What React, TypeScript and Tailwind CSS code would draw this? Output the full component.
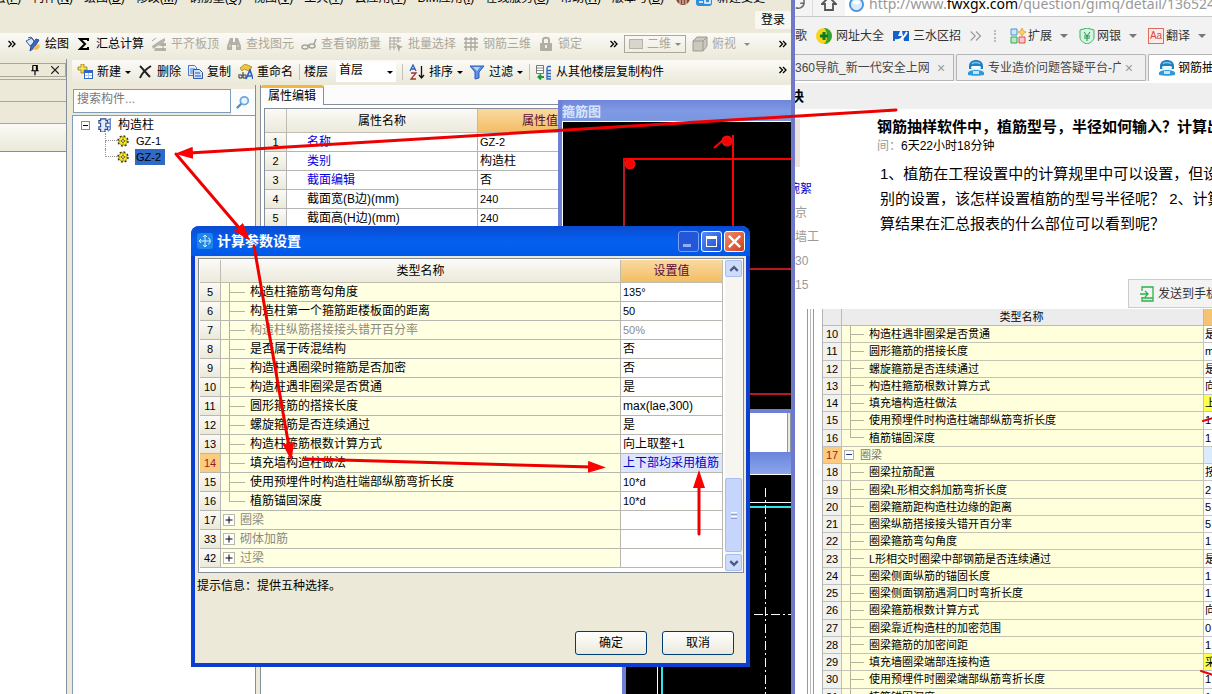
import { useState } from "react";
import type { ReactNode } from "react";

type Param = { no: number; name: string; value?: string; disabled?: boolean; group?: boolean; selected?: boolean };

const dialogRows: Param[] = [
  { no: 5, name: "构造柱箍筋弯勾角度", value: "135°" },
  { no: 6, name: "构造柱第一个箍筋距楼板面的距离", value: "50" },
  { no: 7, name: "构造柱纵筋搭接接头错开百分率", value: "50%", disabled: true },
  { no: 8, name: "是否属于砖混结构", value: "否" },
  { no: 9, name: "构造柱遇圈梁时箍筋是否加密", value: "否" },
  { no: 10, name: "构造柱遇非圈梁是否贯通", value: "是" },
  { no: 11, name: "圆形箍筋的搭接长度", value: "max(lae,300)" },
  { no: 12, name: "螺旋箍筋是否连续通过", value: "是" },
  { no: 13, name: "构造柱箍筋根数计算方式", value: "向上取整+1" },
  { no: 14, name: "填充墙构造柱做法", value: "上下部均采用植筋", selected: true },
  { no: 15, name: "使用预埋件时构造柱端部纵筋弯折长度", value: "10*d" },
  { no: 16, name: "植筋锚固深度", value: "10*d" },
  { no: 17, name: "圈梁", group: true },
  { no: 33, name: "砌体加筋", group: true },
  { no: 42, name: "过梁", group: true },
];

const forumRows: Param[] = [
  { no: 10, name: "构造柱遇非圈梁是否贯通", value: "是" },
  { no: 11, name: "圆形箍筋的搭接长度", value: "m" },
  { no: 12, name: "螺旋箍筋是否连续通过", value: "是" },
  { no: 13, name: "构造柱箍筋根数计算方式", value: "向" },
  { no: 14, name: "填充墙构造柱做法", value: "上", selected: true },
  { no: 15, name: "使用预埋件时构造柱端部纵筋弯折长度", value: "1" },
  { no: 16, name: "植筋锚固深度", value: "1" },
  { no: 17, name: "圈梁", group: true },
  { no: 18, name: "圈梁拉筋配置", value: "按" },
  { no: 19, name: "圈梁L形相交斜加筋弯折长度", value: "2" },
  { no: 20, name: "圈梁箍筋距构造柱边缘的距离", value: "5" },
  { no: 21, name: "圈梁纵筋搭接接头错开百分率", value: "5" },
  { no: 22, name: "圈梁箍筋弯勾角度", value: "1" },
  { no: 23, name: "L形相交时圈梁中部钢筋是否连续通过", value: "是" },
  { no: 24, name: "圈梁侧面纵筋的锚固长度", value: "1" },
  { no: 25, name: "圈梁侧面钢筋遇洞口时弯折长度", value: "1" },
  { no: 26, name: "圈梁箍筋根数计算方式", value: "向" },
  { no: 27, name: "圈梁靠近构造柱的加密范围", value: "0" },
  { no: 28, name: "圈梁箍筋的加密间距", value: "1" },
  { no: 29, name: "填充墙圈梁端部连接构造", value: "采", selected: true },
  { no: 30, name: "使用预埋件时圈梁端部纵筋弯折长度", value: "1" },
  { no: 31, name: "植筋锚固深度", value: "1" },
];

const properties = [
  { no: 1, name: "名称", value: "GZ-2", link: true },
  { no: 2, name: "类别", value: "构造柱", link: true },
  { no: 3, name: "截面编辑", value: "否", link: true },
  { no: 4, name: "截面宽(B边)(mm)", value: "240" },
  { no: 5, name: "截面高(H边)(mm)", value: "240" },
];

const menus: [string, string][] = [
  ["楼层", "F"], ["构件", "N"], ["绘图", "D"], ["修改", "M"], ["钢筋量", "Q"], ["视图", "V"],
  ["工具", "T"], ["云应用", "Y"], ["BIM应用", "I"], ["在线服务", "S"], ["帮助", "H"], ["版本号", "B"],
];

const Svg = ({ children, className = "size-4" }: { children: ReactNode; className?: string }) => (
  <svg viewBox="0 0 16 16" fill="none" className={`shrink-0 ${className}`}>{children}</svg>
);

const Icons = {
  draw: (
    <Svg>
      <path d="M1 5l6-3 3 5-5 3z" fill="#dbe8f8" stroke="#3a5a98" />
      <path d="M3 2l3-1 4 5" stroke="#3a5a98" />
      <path d="M14 4l-5 8-4 3 1-5 5-7z" fill="#3e68c0" stroke="#2a4a90" />
      <path d="M8 13c2 2 5 1 7-2l-1-3-4 2z" fill="#f0c050" />
    </Svg>
  ),
  level: (
    <Svg>
      <path d="M1 10l9-6 4-2v3L2 13z" fill="#b5b3a8" />
      <path d="M4 12h11v3H3zM9 7h6v3H8z" fill="#b5b3a8" />
      <path d="M1 5l4-3M12 6v8" stroke="#a8a69a" />
    </Svg>
  ),
  binoculars: (
    <Svg>
      <path d="M4 2h3v4h2V2h3l3 8v4h-5V9H6v5H1v-4z" fill="#b3b1a6" />
      <path d="M3 10h2M11 10h2" stroke="#e8e6da" />
    </Svg>
  ),
  glasses: (
    <Svg>
      <ellipse cx="4" cy="11" rx="3" ry="2" stroke="#a5a399" strokeWidth="1.5" />
      <ellipse cx="11" cy="10" rx="3" ry="2" stroke="#a5a399" strokeWidth="1.5" />
      <path d="M6 10l2-1M13 8l2-5" stroke="#a5a399" strokeWidth="1.5" />
    </Svg>
  ),
  batch: (
    <Svg>
      <path d="M1 2h12M1 5h12M1 8h8M1 11h7M2 1v13M6 1v13M10 1v6" stroke="#aaa89d" />
      <path d="M8 8l7 3-3 1-1 4z" fill="#aaa89d" />
    </Svg>
  ),
  rebar3d: <Svg><path d="M1 3h14M1 7h14M1 11h14M3 1v14M8 1v14M12 1v14" stroke="#aaa89d" strokeWidth="1.3" /></Svg>,
  lock: (
    <Svg>
      <path d="M5 7V4c0-3 6-3 6 0v3" stroke="#b0aea3" strokeWidth="2" />
      <rect x="2" y="7" width="12" height="8" rx="1" fill="#b0aea3" />
      <path d="M8 9v3" stroke="#eee" strokeWidth="2" />
    </Svg>
  ),
  view: (
    <Svg>
      <path d="M1 5l4-4h10v9l-4 5H1z" fill="#cbc9be" stroke="#9c9a90" />
      <path d="M1 5h10v10M11 5l4-4" stroke="#9c9a90" />
    </Svg>
  ),
  add: (
    <Svg>
      <path d="M4 0h3v3h3v3H7v3H4V6H1V3h3z" fill="#ffe04a" stroke="#8a6d00" strokeWidth=".7" />
      <rect x="7.5" y="6.5" width="8" height="8" fill="#fff" stroke="#2e66c4" />
      <path d="M8 8h7" stroke="#2e66c4" strokeWidth="2" />
      <path d="M8 11.500h7M11.500 9v5" stroke="#a9c6f0" />
    </Svg>
  ),
  remove: <Svg><path d="M3 2c3 3 6 7 10 11M14 2C9 5 5 9 3 14" stroke="#222" strokeWidth="2" /></Svg>,
  copy: (
    <Svg>
      <path d="M1.500 1.500h6l2 2v8h-8z" fill="#e5eefc" stroke="#4a78c8" />
      <path d="M3 5h5M3 7h5M3 9h3" stroke="#4a78c8" />
      <path d="M6.500 5.500h6l3 3v6h-9z" fill="#cfe0fa" stroke="#2b57ac" />
      <path d="M8 9h5M8 12h6" stroke="#2b57ac" />
    </Svg>
  ),
  rename: (
    <Svg>
      <path d="M3 4l5-4 7 3-3 4-5-2-2 2z" fill="#f0c83c" stroke="#9a7414" strokeWidth=".7" />
      <path d="M1 11h4v3H2v-2M6 8v6h3v-3H6" stroke="#333" />
      <path d="M9 15l4-9 3 9M10 12h4" stroke="#2b5cc0" strokeWidth="1.6" />
    </Svg>
  ),
  sort: (
    <Svg>
      <path d="M1 7l3-6 3 6M2 5h4" stroke="#2b5cc0" strokeWidth="1.3" />
      <path d="M2 9h5l-5 6h5" stroke="#a03434" strokeWidth="1.3" />
      <path d="M12.500 2v12M10 11l2.500 3L15 11" stroke="#111" strokeWidth="1.3" />
    </Svg>
  ),
  filter: (
    <Svg>
      <path d="M1 2h14L10 8v6l-4 1V8z" fill="#5b92e6" stroke="#2c5cb4" />
      <path d="M4 3h7L8 7z" fill="#b9d4fa" />
    </Svg>
  ),
  floors: (
    <Svg>
      <path d="M.5 1.500h7v8h-7z" fill="#fff" stroke="#777" />
      <path d="M1 4h6M1 6.500h6" stroke="#888" />
      <path d="M8 13H3M5 10.500L2.500 13 5 15.500" stroke="#1c9a38" strokeWidth="2" />
      <path d="M15 2.500h-3l-1 1.500v11h4M11 6.500h4M11 9.500h4M11 12.500h4" stroke="#2e66c4" strokeWidth="1.300" />
    </Svg>
  ),
  gear: (
    <svg viewBox="0 0 12 12" className="size-3 shrink-0">
      <circle cx="6" cy="6" r="5" fill="none" stroke="#3a3600" strokeWidth="1.500" strokeDasharray="2 1.900" />
      <circle cx="6" cy="6" r="4.200" fill="#fff22a" stroke="#6a6200" strokeWidth=".6" />
      <path d="M6 2v8M2 6h8" stroke="#8a8000" strokeWidth=".7" />
      <circle cx="6" cy="6" r="1.400" fill="#fff" stroke="#4a4400" strokeWidth=".8" />
    </svg>
  ),
  agent: (
    <Svg>
      <path d="M1 9V6c0-8 14-8 14 0v3z" fill="#1f7fc0" />
      <path d="M4 4c1-2 7-2 8 0" stroke="#7cc6f0" strokeWidth="1.500" />
      <rect x="3" y="6" width="10" height="3" rx="1.500" fill="#f2fbff" />
      <path d="M0 15v-2c0-4 16-4 16 0v2c-4 1-12 1-16 0z" fill="#2f9ad8" />
      <rect x="5" y="11" width="6" height="3" fill="#bfe6fc" />
    </Svg>
  ),
};

const Caret = ({ className = "border-t-black" }: { className?: string }) => (
  <span className={`size-0 shrink-0 border-x-[3px] border-t-[3px] border-x-transparent ${className}`} />
);

const Chevrons = () => (
  <Svg className="size-2"><path d="M1 2l6 6-6 6M8 2l6 6-6 6" stroke="#000" strokeWidth="2.600" /></Svg>
);

const Sep = () => <span className="h-4 w-px shrink-0 bg-[#c5c2b8]" />;

function ToolButton({ icon, label, caret, disabled }: { icon: ReactNode; label: string; caret?: boolean; disabled?: boolean }) {
  return (
    <button disabled={disabled} className="flex shrink-0 items-center gap-1 whitespace-nowrap disabled:text-[#aca899]">
      {icon}
      {label}
      {caret && <Caret />}
    </button>
  );
}

// elbow line in front of a tree leaf
function Branch({ last, className }: { last?: boolean; className: string }) {
  return (
    <span className={`flex shrink-0 flex-col self-stretch ${className}`}>
      <span className="flex-1 border-b border-l border-[#b4b49c]" />
      <span className={`flex-1 border-l ${last ? "border-transparent" : "border-[#b4b49c]"}`} />
    </span>
  );
}

function MenuBar() {
  return (
    <div className="flex h-[6px] shrink-0 items-end overflow-hidden leading-4">
      <div className="-ml-[18px] flex shrink-0 gap-[11px] whitespace-nowrap">
        {menus.map(([label, key]) => (
          <button key={label}>{label}(<u>{key}</u>)</button>
        ))}
        <span className="flex gap-[5px]">
          <Svg><circle cx="8" cy="8" r="7" fill="#8a4a3a" /><path d="M5 9v5M8 9v5M11 9v5" stroke="#f3dccb" /></Svg>
          <Svg><rect width="16" height="16" rx="3" fill="#2a8fe0" /><path d="M3 12h4M9 9h5v4H9z" stroke="#fff" strokeWidth="1.500" /></Svg>
          <button>新建变更</button>
        </span>
      </div>
    </div>
  );
}

function MainToolbar() {
  return (
    <div className="flex h-[26px] shrink-0 items-center bg-linear-to-b from-[#fbfaf7] to-[#ebe9d9] pb-1">
      <div className="flex w-[25px] shrink-0 pl-2"><Chevrons /></div>
      <div className="flex items-center gap-[7px]">
        <ToolButton icon={Icons.draw} label="绘图" />
        <ToolButton icon={<Svg><path d="M12 5V3H4l5 5-5 5h8v-2" stroke="#000" strokeWidth="2" /></Svg>} label="汇总计算" />
        <ToolButton disabled icon={Icons.level} label="平齐板顶" />
        <ToolButton disabled icon={Icons.binoculars} label="查找图元" />
        <ToolButton disabled icon={Icons.glasses} label="查看钢筋量" />
        <ToolButton disabled icon={Icons.batch} label="批量选择" />
        <ToolButton disabled icon={Icons.rebar3d} label="钢筋三维" />
        <ToolButton disabled icon={Icons.lock} label="锁定" />
      </div>
      <div className="ml-auto flex items-center gap-[6px] pr-1">
        <Chevrons />
        <div className="flex h-[18px] w-[62px] items-center justify-between border border-[#aca899] px-1 text-[#aca899]">
          <span className="h-[10px] w-[14px] border border-[#b5b3a8] bg-[#d8d6cc]" />
          <select aria-label="视图模式" disabled className="w-6 appearance-none"><option>二维</option></select>
          <Caret className="border-t-[#8d8b80]" />
        </div>
        <div className="flex w-[81px] items-center gap-1 text-[#aca899]">
          {Icons.view}
          <button disabled>俯视</button>
          <span className="flex pl-1"><Caret className="border-t-[#8d8b80]" /></span>
        </div>
        <Chevrons />
      </div>
    </div>
  );
}

function ComponentToolbar() {
  return (
    <div className="flex h-6 shrink-0 items-center gap-[6px] bg-linear-to-b from-[#fbfaf7] to-[#ebe9d9] pr-1 pl-[5px]">
      <ToolButton icon={Icons.add} label="新建" caret />
      <ToolButton icon={Icons.remove} label="删除" />
      <ToolButton icon={Icons.copy} label="复制" />
      <ToolButton icon={Icons.rename} label="重命名" />
      <div className="flex items-center gap-1">
        <Sep />
        <label htmlFor="floor">楼层</label>
        <div className="ml-1 flex h-5 w-[60px] items-center justify-between bg-white px-[3px]">
          <select id="floor" className="h-5 w-10 appearance-none pb-1"><option>首层</option></select>
          <Caret />
        </div>
      </div>
      <Sep />
      <ToolButton icon={Icons.sort} label="排序" caret />
      <ToolButton icon={Icons.filter} label="过滤" caret />
      <Sep />
      <ToolButton icon={Icons.floors} label="从其他楼层复制构件" />
      <span className="ml-auto flex pb-1"><Chevrons /></span>
    </div>
  );
}

function DockPanel() {
  return (
    <aside className="flex w-[67px] shrink-0 flex-col border-r border-[#848e98] bg-[#ece9d8] pt-1">
      <div className="flex h-[14px] shrink-0 items-center justify-end gap-2 border border-l-0 border-[#aca899] pr-1">
        <button aria-label="固定"><Svg className="size-3"><path d="M5 2h6v7M5 2v7M10 2v7M3 9h10M8 9v6" stroke="#000" strokeWidth="1.600" /></Svg></button>
        <button aria-label="关闭"><Svg className="size-3"><path d="M3 3l10 10M13 3L3 13" stroke="#222" strokeWidth="1.500" /></Svg></button>
      </div>
      <div className="mt-[2px] h-[23px] shrink-0 border-y border-[#aca899]" />
      <div className="h-[22px] shrink-0 border-b border-[#aca899]" />
      <div className="h-7 shrink-0 border-b border-[#848e98] bg-linear-to-b from-[#fbfaf7] to-[#ebe9d9]" />
      <div className="flex-1 bg-white" />
    </aside>
  );
}

function ComponentTree() {
  const [selected, setSelected] = useState("GZ-2");
  return (
    <aside className="flex w-[184px] shrink-0 flex-col border-r border-[#848e98]">
      <div className="mt-1 flex h-[26px] shrink-0 pl-px">
        <input aria-label="搜索构件" placeholder="搜索构件..." className="h-6 w-[158px] border border-[#7f9db9] bg-white px-[3px] pb-1 placeholder:text-[#777]" />
        <button aria-label="搜索" className="flex flex-1 items-center justify-center bg-[#fafcfe]">
          <Svg className="size-[14px]"><circle cx="9.500" cy="6.500" r="4.500" stroke="#6fa8dc" strokeWidth="2" fill="#eaf5fd" /><path d="M6 10l-5 5" stroke="#4a8ccc" strokeWidth="2.500" /></Svg>
        </button>
      </div>
      <div className="flex-1 border-t border-l border-[#7f9db9] bg-white pt-px">
        <div className="flex h-4 items-center gap-2 pl-2">
          <span className="flex size-[9px] items-center justify-center border border-[#7b8fa8]"><span className="h-px w-[5px] bg-black" /></span>
          <span className="flex items-center gap-[6px]">
            <Svg className="size-[14px]"><path d="M3 1h6v2h2v3H9v4h2v3H8v3H3v-3H1v-3h2V6H1V3h2z" fill="#e4ecfb" stroke="#2c478c" strokeWidth="1.300" /><path d="M11 2l3-1v12l-3 2M11 6h3M11 10h3" stroke="#5f80cc" strokeWidth="1.500" /></Svg>
            构造柱
          </span>
        </div>
        {["GZ-1", "GZ-2"].map((name, i) => (
          <div key={name} className="flex h-4 items-center pl-8">
            <span className="flex h-4 w-3 flex-col">
              <span className="h-2 border-b border-l border-dotted border-[#999]" />
              <span className={`h-2 border-dotted border-[#999] ${i === 0 ? "border-l" : ""}`} />
            </span>
            {Icons.gear}
            <button
              onClick={() => setSelected(name)}
              className={`ml-[6px] h-4 w-[30px] pl-px text-left text-[11px] leading-4 ${selected === name ? "bg-[#316ac5]" : ""}`}
            >
              {name}
            </button>
          </div>
        ))}
      </div>
    </aside>
  );
}

function PropertyGrid() {
  return (
    <table className="w-full table-fixed border-separate border-spacing-0 border-t border-l border-[#848e98] bg-white">
      <colgroup><col className="w-[22px]" /><col className="w-[191px]" /><col /></colgroup>
      <thead>
        <tr className="h-6 bg-linear-to-b from-[#fbfaf7] to-[#ebe9d9]">
          <th className="border-r border-b border-[#c0bdb0]" />
          <th className="border-r border-b border-[#c0bdb0] font-normal">属性名称</th>
          <th className="border-b border-[#c0bdb0] bg-linear-to-b from-[#fad9a0] to-[#f3bd62] pl-11 text-left font-normal text-[#5c0a3c]">属性值</th>
        </tr>
      </thead>
      <tbody>
        {properties.map((p) => (
          <tr key={p.no} className="h-[19px]">
            <td className="border-r border-b border-[#b4b4b4] bg-linear-to-b from-[#fbfaf7] to-[#ebe9d9] text-center text-[11px]">{p.no}</td>
            <td className={`border-r border-b border-[#b4b4b4] pl-5 ${p.link ? "text-[#0000e0]" : ""}`}>{p.name}</td>
            <td className="border-b border-[#b4b4b4] pl-[2px] text-[11px]">{/[0-9]/.test(p.value) ? p.value : <span className="text-xs leading-4">{p.value}</span>}</td>
          </tr>
        ))}
      </tbody>
    </table>
  );
}

function StirrupWindow() {
  return (
    <section className="absolute top-[15px] right-0 left-[297px] flex h-[313px] flex-col border-b-4 border-l-4 border-[#6f7fd6] bg-[#7a96df]">
      <h2 className="h-[21px] shrink-0 bg-linear-to-b from-[#6f86d8] via-[#7e9ae4] to-[#7a96df] text-[13px] leading-6 font-bold text-[#d8e4fc]">箍筋图</h2>
      <svg className="w-full flex-1 border-t border-l border-white bg-black" fill="none" stroke="#e81010" strokeWidth="2">
        <path d="M61 160V37h170M170 13v160M151 26l9-8" stroke="#ff0000" />
        <path d="M61 40v120M180 147h60M180 272h60" stroke="#b81820" />
        <circle cx="67" cy="42" r="4.500" fill="#ff0000" />
        <circle cx="164" cy="19" r="4.500" fill="#ff0000" />
      </svg>
    </section>
  );
}

function DrawingWindow() {
  return (
    <section className="absolute top-[367px] right-0 bottom-0 left-[361px] flex flex-col border-l-4 border-[#6f7fd6]">
      <div className="h-[22px] shrink-0 bg-linear-to-b from-[#6b84da] to-[#8aa6ec]" />
      <svg className="w-full flex-1 border-t border-white bg-black" fill="none">
        <path d="M31.500 220V27.500h140" stroke="#fff" />
        <path d="M36 220V32h140" stroke="#30e4e8" strokeWidth="2" />
        <path d="M139.500 13v220" stroke="#fff" strokeDasharray="9 3 2 3" />
        <path d="M128 139.500h40" stroke="#fff" strokeDasharray="9 3 2 3" />
      </svg>
    </section>
  );
}

function DesktopApp() {
  return (
    <div className="flex w-[795px] shrink-0 flex-col overflow-hidden border-r-4 border-[#7078cc] bg-[#ece9d8]">
      <MenuBar />
      <div className="flex h-[27px] shrink-0 items-center justify-end">
        <button className="h-[18px] rounded-xs bg-[#f8f7f2] px-[6px] leading-[18px]">登录</button>
      </div>
      <MainToolbar />
      <div className="flex min-h-0 flex-1">
        <DockPanel />
        <div className="ml-[5px] flex min-w-0 flex-1 flex-col pt-px">
          <ComponentToolbar />
          <div className="flex min-h-0 flex-1 gap-1 pt-px">
            <ComponentTree />
            <div className="relative flex min-w-0 flex-1 flex-col border-l border-[#848e98] bg-white">
              <div className="flex h-5 shrink-0">
                <button className="w-[63px] rounded-t-xs border-t-[3px] border-r border-t-[#f5b640] border-r-[#848e98] pb-1 leading-4">属性编辑</button>
                <span className="flex-1 border-b border-[#848e98] bg-[#fcfcfd]" />
              </div>
              <div className="pt-[3px] pl-[3px]"><PropertyGrid /></div>
              <StirrupWindow />
              <div className="absolute top-[328px] right-0 h-[39px] w-1 border-x border-[#8b99a5] bg-[#ece9d8]" />
              <DrawingWindow />
            </div>
          </div>
        </div>
      </div>
    </div>
  );
}

function ParamDialog() {
  return (
    <section role="dialog" aria-labelledby="dlg-title" className="absolute top-[226px] left-[191px] flex h-[441px] w-[559px] flex-col rounded-t-lg border-x-4 border-b-4 border-[#0a3fd0] bg-[#ece9d8]">
      <header className="-mx-1 flex h-[30px] shrink-0 items-center gap-1 rounded-t-lg bg-linear-to-b from-[#0a4ad0] via-[#0560f0] to-[#0058e8] pr-[5px] pl-[6px] text-white">
        <Svg><rect width="16" height="16" rx="3" fill="#1d86e8" /><path d="M8 2v12M2 8h11M6 4l2-2 2 2M4 6L2 8l2 2M11 5c3 0 3 6 0 6M6 12l2 2 2-2" stroke="#d4f2ff" /></Svg>
        <h2 id="dlg-title" className="flex-1 text-sm leading-4 font-bold">计算参数设置</h2>
        <div className="flex gap-[2px]">
          <button aria-label="最小化" className="flex size-[21px] items-end rounded-[3px] border border-[#7fa0ee] bg-[#2356d8] p-1"><span className="h-[3px] w-2 bg-[#8fb0f4]" /></button>
          <button aria-label="最大化" className="size-[21px] rounded-[3px] border border-white bg-linear-to-br from-[#5c8cf4] to-[#1648d0] p-1"><span className="block size-full border border-t-[3px] border-white" /></button>
          <button aria-label="关闭" className="flex size-[21px] items-center justify-center rounded-[3px] border border-white bg-linear-to-br from-[#f08a68] to-[#d03c14]"><Svg className="size-[15px]"><path d="M2 2l12 12M14 2L2 14" stroke="#fff" strokeWidth="2.500" /></Svg></button>
        </div>
      </header>
      <div className="mt-[2px] mr-[2px] ml-[3px] flex border border-[#848e98] bg-white pt-px pl-px">
        <table className="mb-1 flex-1 table-fixed border-separate border-spacing-0">
          <colgroup><col className="w-[21px]" /><col /><col className="w-[102px]" /></colgroup>
          <thead>
            <tr className="h-[23px] bg-linear-to-b from-[#fbfaf7] to-[#ebe9d9]">
              <th className="border-r border-b border-[#c0bdb0]" />
              <th className="border-r border-b border-[#c0bdb0] font-normal">类型名称</th>
              <th className="border-r border-b border-[#c0bdb0] bg-linear-to-b from-[#fad9a0] to-[#f3bd62] font-normal text-[#5c0a3c]">设置值</th>
            </tr>
          </thead>
          <tbody>
            {dialogRows.map((r) => (
              <tr key={r.no} className="h-[19px]">
                <td className={`border-r border-b border-[#b8b8b0] text-center text-[11px] ${r.selected ? "bg-[#fbcb80] text-[#a01c1c]" : "bg-linear-to-b from-[#fbfaf7] to-[#ebe9d9]"}`}>{r.no}</td>
                <td className={`border-r border-b border-[#b8b8b0] bg-[#ffffe1] ${r.disabled || r.group ? "text-[#8a8a80]" : ""}`}>
                  <div className="flex h-[18px] items-center">
                    {r.group ? (
                      <button aria-label="展开" className="mr-[5px] ml-[2px] flex size-3 items-center justify-center border border-[#b8b8b0] bg-white text-black">
                        <Svg className="size-2"><path d="M8 1v14M1 8h14" stroke="#000" strokeWidth="2" /></Svg>
                      </button>
                    ) : (
                      <Branch last={r.no === 16} className="mr-[5px] ml-2 w-4" />
                    )}
                    {r.name}
                  </div>
                </td>
                <td className={`border-r border-b border-[#b8b8b0] pl-[2px] whitespace-nowrap ${r.selected ? "bg-[#dde6fa] text-[#0000c8]" : ""} ${r.disabled ? "text-[#8a8a80]" : ""}`}>
                  <span className={/^[0-9]/.test(r.value ?? "") ? "text-[11px]" : "text-xs leading-4"}>{r.value}</span>
                </td>
              </tr>
            ))}
          </tbody>
        </table>
        <div className="ml-[2px] flex w-[18px] flex-col bg-[#f6f5f0] pr-px pb-px">
          <button aria-label="向上滚动" className="flex h-[17px] items-center justify-center rounded-xs border border-[#a9bdf0] bg-[#cddcfc]"><Svg className="size-[10px]"><path d="M2 11l6-6 6 6" stroke="#4a5a80" strokeWidth="3.500" /></Svg></button>
          <div className="flex-1" />
          <div className="flex h-[74px] flex-col items-center justify-center gap-px rounded-xs border border-[#a9bdf0] bg-[#c5d5fc]">
            <span className="h-px w-[6px] bg-white" />
            <span className="h-px w-[6px] bg-[#8ba4e0]" />
            <span className="h-px w-[6px] bg-white" />
            <span className="h-px w-[6px] bg-[#8ba4e0]" />
          </div>
          <button aria-label="向下滚动" className="mt-[2px] flex h-[17px] items-center justify-center rounded-xs border border-[#a9bdf0] bg-[#cddcfc]"><Svg className="size-[10px]"><path d="M2 5l6 6 6-6" stroke="#4a5a80" strokeWidth="3.500" /></Svg></button>
        </div>
      </div>
      <p className="flex-1 px-[2px] pt-[5px] leading-4">提示信息：提供五种选择。</p>
      <footer className="flex justify-end gap-[15px] pr-3 pb-2">
        {["确定", "取消"].map((t) => (
          <button key={t} className="h-6 w-[72px] rounded-[3px] border border-[#003c74] bg-linear-to-b from-white to-[#ebe9dc] leading-4">{t}</button>
        ))}
      </footer>
    </section>
  );
}

function BrowserChrome() {
  const grayCaret = <span className="ml-2 size-0 shrink-0 border-x-4 border-t-4 border-x-transparent border-t-[#777]" />;
  return (
    <>
      <div className="h-[17px] shrink-0 overflow-hidden border-b border-[#c8c8c8] bg-white">
        <div className="-mt-3 flex h-8 items-center">
          <button aria-label="刷新" className="flex h-full w-[18px] shrink-0 items-center border-r border-[#ddd] bg-[#f4f4f4]"><Svg className="size-3"><path d="M1 13c5 2 10-1 11-5M12 2v5H7" stroke="#666" strokeWidth="2" /></Svg></button>
          <button aria-label="主页" className="flex h-full w-8 shrink-0 items-center justify-center bg-[#f4f4f4]"><Svg><path d="M1 8l7-7 7 7h-3v6H4V8z" stroke="#555" strokeWidth="1.800" /></Svg></button>
          <Svg className="ml-1 size-[15px]"><circle cx="8" cy="8" r="7" fill="#d6ecfc" stroke="#4a90dc" strokeWidth="2" /><path d="M4 6c3-4 6-3 8 0-3 3-6 2-8 0" fill="#fff" /></Svg>
          <span className="ml-[5px] font-['Noto_Sans'] text-sm whitespace-nowrap text-[#999]">http://www.<b className="font-normal text-black">fwxgx.com</b>/question/gimq/detail/136524</span>
        </div>
      </div>
      <nav className="flex h-[37px] shrink-0 items-center bg-[#f2f2f2] whitespace-nowrap text-[#333]">
        <span className="flex w-3 shrink-0 justify-end overflow-hidden">歌</span>
        <a href="#site" className="ml-[9px] flex items-center gap-1">
          <Svg><circle cx="8" cy="8" r="8" fill="#f8d41c" /><path d="M8 0a8 8 0 010 16c4-3 4-12 0-16" fill="#2da33a" /><path d="M8 4v8M4 8h8" stroke="#0c7a20" strokeWidth="3" /></Svg>
          网址大全
        </a>
        <a href="#sanshui" className="ml-[9px] flex items-center gap-1">
          <Svg><path d="M0 3h7l-2 5h4l-3 5H0zM9 3h7v10h-5z" fill="#1460cc" /><path d="M2 12c5 1 9-2 12-8" stroke="#fff" strokeWidth="2" /></Svg>
          三水区招
        </a>
        <Svg className="ml-[9px] size-3"><path d="M1 2l6 6-6 6M8 2l6 6-6 6" stroke="#999" strokeWidth="1.500" /></Svg>
        <span className="mr-[14px] ml-3 h-3 border-l-2 border-dotted border-[#bbb]" />
        <button className="flex shrink-0 items-center">
          <Svg><path d="M1 1h6v6H1z" fill="#cfe6fa" stroke="#4a90d8" /><path d="M1 9h6v6H1z" fill="#b7ecc4" stroke="#30a850" /><path d="M9 9h6v6H9z" fill="#fbc8c8" stroke="#d85050" /><path d="M12 0l1.500 3L16 4l-2.500 1.500L12 8l-1.500-2.500L8 4l2.500-1z" fill="#fcd060" stroke="#d89820" strokeWidth=".7" /></Svg>
          <span className="ml-[2px]">扩展</span>{grayCaret}
        </button>
        <button className="ml-[11px] flex shrink-0 items-center">
          <Svg><path d="M8 0l7 2v7c0 4-4 6-7 7-3-1-7-3-7-7V2z" fill="#d8f4e0" stroke="#38b068" /><path d="M5 4l3 4 3-4M8 8v5M5 8h6M5 10h6" stroke="#1d9450" /></Svg>
          <span className="ml-[2px]">网银</span>{grayCaret}
        </button>
        <button className="ml-[11px] flex shrink-0 items-center">
          <span className="flex size-4 items-center justify-center border border-[#e06a60] bg-[#fdecea] text-[10px] leading-none text-[#d8453a]">Aa</span>
          <span className="ml-[2px]">翻译</span>{grayCaret}
        </button>
      </nav>
      <div className="flex h-[27px] shrink-0 items-stretch gap-[2px] bg-[#eaeaea] whitespace-nowrap text-[#444]">
        <div className="flex w-[159px] shrink-0 items-center gap-2 border-t border-r border-b border-[#b5b5b5] bg-[#f0f0f0]">
          <span className="w-[134px] overflow-hidden">360导航_新一代安全上网导</span>
          <button aria-label="关闭标签" className="text-sm text-[#999]">×</button>
        </div>
        <div className="flex w-[190px] shrink-0 items-center gap-1 rounded-t-xs border border-[#b5b5b5] bg-[#f0f0f0] pl-[11px]">
          {Icons.agent}
          <span className="w-[133px] overflow-hidden">专业造价问题答疑平台-广</span>
          <button aria-label="关闭标签" className="ml-auto pr-3 text-sm text-[#999]">×</button>
        </div>
        <div className="flex flex-1 items-center gap-[3px] overflow-hidden rounded-tl-xs border-t border-l border-[#b5b5b5] bg-white pl-[10px] text-black">
          {Icons.agent}
          <span>钢筋抽</span>
        </div>
      </div>
    </>
  );
}

function ForumTable() {
  return (
    <div className="ml-3 flex min-h-0 flex-1 overflow-hidden">
      <div className="flex w-4 shrink-0 gap-[2px] border-r border-[#b4b4b4]">
        <span className="w-px bg-[#999]" /><span className="w-px bg-[#bbb]" /><span className="w-px bg-[#999]" />
      </div>
      <div className="min-w-0 flex-1">
        <table className="h-[397px] w-full table-fixed border-separate border-spacing-0 text-[11px] leading-3">
          <colgroup><col className="w-[19px]" /><col /><col className="w-2" /></colgroup>
          <thead>
            <tr className="h-[17px] bg-[#ececec]">
              <th className="border-r border-b border-[#bbb]" />
              <th className="border-r border-b border-[#bbb] pr-[2px] font-normal">类型名称</th>
              <th className="border-b border-[#bbb] bg-[#f5c374]" />
            </tr>
          </thead>
          <tbody>
            {forumRows.map((r) => (
              <tr key={r.no}>
                <td className={`border-r border-b border-[#c0c0c0] text-center ${r.no === 17 ? "bg-[#fbcb80] text-[#a01c1c]" : "bg-[#f1f1ee]"}`}>{r.no}</td>
                <td className="h-px border-r border-b border-[#c4c4b4] bg-[#ffffdc]">
                  <div className={`flex h-full items-center whitespace-nowrap ${r.group ? "text-[#777]" : ""}`}>
                    {r.group ? (
                      <button aria-label="折叠" className="mr-[6px] ml-[2px] flex size-[10px] items-center justify-center border border-[#aab] bg-white"><span className="h-px w-[6px] bg-[#223a80]" /></button>
                    ) : (
                      <Branch last={r.no === 16} className="mr-[5px] ml-2 w-[14px]" />
                    )}
                    {r.name}
                  </div>
                </td>
                <td className={`overflow-hidden border-b border-[#c4c4c4] pl-px whitespace-nowrap ${r.selected ? "bg-[#ffff50]" : r.group ? "bg-[#dcebfc]" : "bg-white"}`}>{r.value}</td>
              </tr>
            ))}
          </tbody>
        </table>
      </div>
    </div>
  );
}

function Browser() {
  return (
    <div className="flex min-w-0 flex-1 flex-col overflow-hidden bg-white">
      <BrowserChrome />
      <div className="mt-[2px] flex h-[26px] shrink-0 items-center bg-[#efefef]">
        <b className="flex w-[9px] justify-end overflow-hidden text-sm">快</b>
      </div>
      <main className="flex h-[200px] shrink-0">
        <aside className="w-[82px] shrink-0 whitespace-nowrap text-[#999]">
          <div className="mt-[10px] h-[48px] w-[5px] bg-[#eee4de]" />
          <div className="mt-[10px] flex flex-col leading-6">
            <a href="#user" className="flex w-[17px] justify-end overflow-hidden text-[#0000cc]">婉絮</a>
            <span className="flex w-3 justify-end overflow-hidden">京</span>
            <span className="flex w-6 justify-end overflow-hidden">墙工</span>
            <span>30</span>
            <span>15</span>
          </div>
        </aside>
        <article className="min-w-0 flex-1 pt-[9px] whitespace-nowrap">
          <h1 className="text-[15px] leading-[18px] font-bold">钢筋抽样软件中，植筋型号，半径如何输入？计算出</h1>
          <p className="leading-5"><span className="text-[#999]">间：</span>6天22小时18分钟</p>
          <p className="pt-[5px] pl-[3px] text-[15px] leading-[25px]">
            1、植筋在工程设置中的计算规里中可以设置，但设<br />
            别的设置，该怎样设置植筋的型号半径呢？ 2、计算<br />
            算结果在汇总报表的什么部位可以看到呢？
          </p>
          <div className="flex justify-end pt-[43px]">
            <button className="flex h-[29px] w-[84px] items-center gap-[3px] overflow-hidden border border-r-0 border-[#ccc] bg-[#f3f3f3] pl-[10px] text-[#333]">
              <Svg><path d="M3 5V1h11v14H3v-4M3 12h11M1 8h8M6 5l3 3-3 3" stroke="#2bb34a" strokeWidth="1.300" /></Svg>
              发送到手机
            </button>
          </div>
        </article>
      </main>
      <ForumTable />
    </div>
  );
}

// red pen marks over both windows
function Annotations() {
  return (
    <svg className="pointer-events-none absolute inset-0 size-full" fill="none" stroke="#ee0000" strokeWidth="3" strokeLinecap="round">
      <defs>
        <marker id="head" markerUnits="userSpaceOnUse" markerWidth="18" markerHeight="12" refX="4" refY="6" orient="auto">
          <path d="M0 0l18 6-18 6z" fill="#ff0000" stroke="none" />
        </marker>
      </defs>
      <path d="M896 110L189 153" markerEnd="url(#head)" />
      <path d="M176 154l65 76" markerEnd="url(#head)" />
      <path d="M254 246l35 201" markerEnd="url(#head)" />
      <path d="M305 459l287 8" markerEnd="url(#head)" />
      <path d="M699 534v-50" markerEnd="url(#head)" />
      <path d="M1203 421l10-3M1201 671l12 4" strokeWidth="2" />
    </svg>
  );
}

export default function App() {
  return (
    <div className="relative flex h-screen overflow-hidden bg-white font-['Liberation_Sans','Noto_Sans_CJK_SC',sans-serif] text-xs leading-4 text-black">
      <DesktopApp />
      <Browser />
      <ParamDialog />
      <Annotations />
    </div>
  );
}
